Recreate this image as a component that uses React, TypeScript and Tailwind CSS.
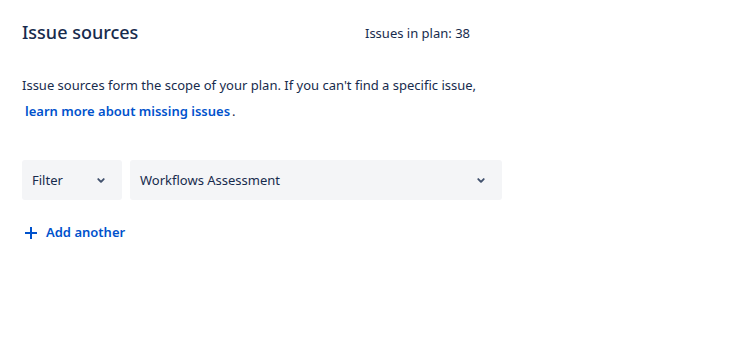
import React from 'react';

const Chevron: React.FC = () => (
  <svg width="22" height="22" viewBox="0 0 24 24" className="text-[#42526E]">
    <path d="M8.292 10.293a1.009 1.009 0 000 1.419l2.939 2.965c.218.215.5.322.779.322s.556-.107.769-.322l2.93-2.955a1.01 1.01 0 000-1.419.987.987 0 00-1.406 0l-2.298 2.317-2.307-2.327a.99.99 0 00-1.406 0z" fill="currentColor" />
  </svg>
);

const App: React.FC = () => {
  return (
    <div className="w-[732px] h-[338px] bg-white px-[22px] pt-[18px] font-['Noto_Sans',sans-serif] text-[#172B4D]">
      <div className="flex items-center w-[448px] justify-between">
        <h2 className="text-[18px] font-medium leading-7">Issue sources</h2>
        <span className="text-[13px] pt-1">Issues in plan: 38</span>
      </div>

      <p className="mt-[26px] text-[13px] leading-[26px]">
        Issue sources form the scope of your plan. If you can't find a specific issue,
        <br />
        <a className="ml-[3px] text-[#0052CC] font-semibold">learn more about missing issues</a>
        <span className="ml-[2px]">.</span>
      </p>

      <div className="mt-[36px] flex gap-2 w-[480px]">
        <button className="w-[100px] h-10 rounded-[3px] bg-[#F4F5F7] flex items-center justify-between pl-[10px] pr-[10px] text-[13px]">
          <span className="pt-px">Filter</span>
          <Chevron />
        </button>
        <button className="flex-1 h-10 rounded-[3px] bg-[#F4F5F7] flex items-center justify-between pl-[10px] pr-[10px] text-[13px]">
          <span className="pt-px">Workflows Assessment</span>
          <Chevron />
        </button>
      </div>

      <button className="mt-[23px] flex items-center gap-[8px] text-[#0052CC] text-[13px] font-semibold">
        <svg width="14" height="14" viewBox="0 0 14 14" className="ml-[2px]">
          <path d="M7 1v12M1 7h12" stroke="currentColor" strokeWidth="2" />
        </svg>
        <span>Add another</span>
      </button>
    </div>
  );
};

export default App;
